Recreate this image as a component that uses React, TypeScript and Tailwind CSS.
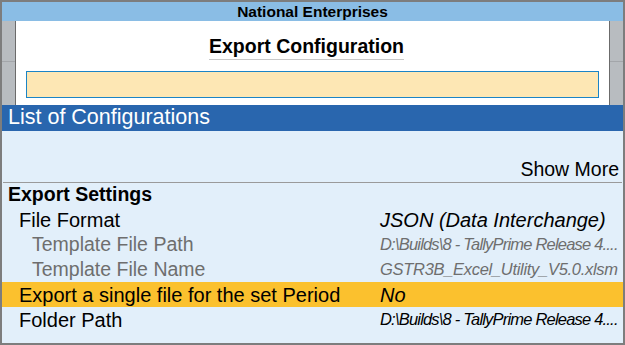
const rows = [
  { label: 'File Format', value: 'JSON (Data Interchange)', kind: 'main' },
  { label: 'Template File Path', value: 'D:\\Builds\\8 - TallyPrime Release 4....', kind: 'muted' },
  { label: 'Template File Name', value: 'GSTR3B_Excel_Utility_V5.0.xlsm', kind: 'muted' },
  { label: 'Export a single file for the set Period', value: 'No', kind: 'active' },
  { label: 'Folder Path', value: 'D:\\Builds\\8 - TallyPrime Release 4....', kind: 'path' },
];

function SideRail({ left }: { left?: boolean }) {
  return (
    <div
      className={`w-[14px] flex flex-col bg-[#b8bcc0] ${left ? 'border-r border-[#6b6b6b]' : 'border-l border-[#6b6b6b]'}`}
    >
      <div className="h-[41px] border-b border-[#a3a6aa]" />
    </div>
  );
}

export default function App() {
  return (
    <div
      className="w-[625px] h-[345px] border-2 border-[#7d7d7d] flex flex-col overflow-hidden bg-[#e2effa] text-black"
      style={{ fontFamily: '"Liberation Sans", Arial, sans-serif' }}
    >
      <div className="h-[19px] bg-[#8abde5] flex items-center justify-center">
        <span className="text-[15.5px] font-bold leading-none">National Enterprises</span>
      </div>

      <div className="h-[84px] flex">
        <SideRail left />
        <div className="flex-1 bg-white flex flex-col items-center px-[10px]">
          <div className="mt-[15px] mr-[12px] text-[19.5px] font-bold leading-[21px] border-b border-[#c8c8c8] pb-[2px]">
            Export Configuration
          </div>
          <div className="mt-[11px] w-full h-[27px] bg-[#fde7b4] border border-[#1b84c6]" />
        </div>
        <SideRail />
      </div>

      <div className="h-[26px] bg-[#2966ae] flex items-center px-[6px]">
        <span className="text-white text-[21.5px] leading-none">List of Configurations</span>
      </div>

      <div className="flex-1 flex flex-col">
        <div className="h-[27px]" />
        <div className="h-[24px] flex items-center justify-end pr-[4px] text-[19.5px]">Show More</div>
        <div className="h-px bg-[#9a9a9a] mx-px" />

        <div className="h-[24px] flex items-center pl-[6px] text-[19.5px] font-bold">Export Settings</div>

        {rows.map((row) => (
          <div
            key={row.label}
            className={`h-[25px] flex items-center ${row.kind === 'active' ? 'bg-[#fbc12e]' : ''}`}
          >
            <div
              className={`w-[378px] shrink-0 ${
                row.kind === 'muted'
                  ? 'pl-[30px] text-[19.5px] text-[#6e6e6e]'
                  : 'pl-[17px] text-[20px]'
              }`}
            >
              {row.label}
            </div>
            {row.kind === 'muted' || row.kind === 'path' ? (
              <div
                className={`italic whitespace-nowrap text-[16.5px] ${
                  row.kind === 'muted' ? 'text-[#6e6e6e]' : ''
                } ${row.value.startsWith('D:') ? 'tracking-[-0.8px]' : 'tracking-[-0.3px]'}`}
              >
                {row.value}
              </div>
            ) : (
              <div className="italic whitespace-nowrap text-[20px]">{row.value}</div>
            )}
          </div>
        ))}
      </div>
    </div>
  );
}
